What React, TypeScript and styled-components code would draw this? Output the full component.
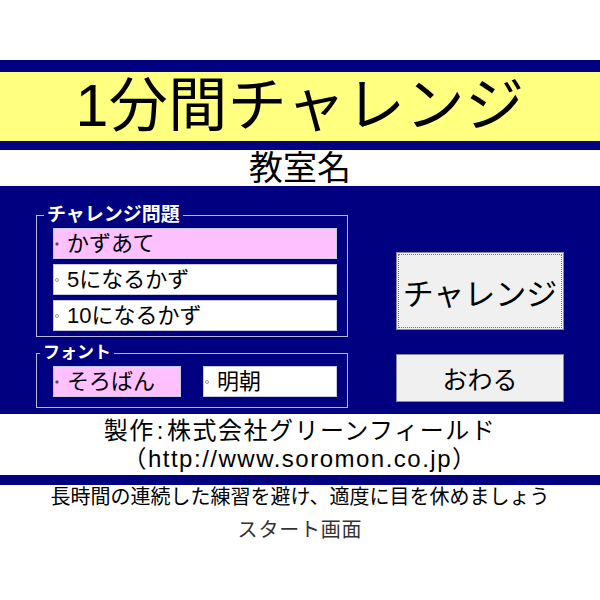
import styled, { createGlobalStyle } from "styled-components";

const GlobalStyle = createGlobalStyle`
  body {
    margin: 0;
    background: #fff;
    font-family: "Liberation Sans", "Noto Sans CJK JP", sans-serif;
    color: #000;
  }
`;

const NAVY = "#000080";

const Page = styled.div`
  width: 600px;
  height: 600px;
  display: flex;
  flex-direction: column;
`;

const Spacer = styled.div<{ $h: number }>`
  height: ${(p) => p.$h}px;
  flex-shrink: 0;
`;

const NavyRule = styled.div<{ $h: number }>`
  height: ${(p) => p.$h}px;
  background: ${NAVY};
  flex-shrink: 0;
`;

const TitleBand = styled.h1`
  margin: 0;
  height: 69px;
  background: #ffff80;
  font-size: 59px;
  font-weight: normal;
  line-height: 69px;
  text-align: center;
  letter-spacing: 0.5px;
`;

const RoomName = styled.div`
  height: 36px;
  font-size: 34px;
  line-height: 36px;
  text-align: center;
`;

const Panel = styled.div`
  height: 228px;
  box-sizing: border-box;
  background: ${NAVY};
  display: grid;
  grid-template-columns: 312px 168px;
  column-gap: 48px;
  padding: 18px 0 5px 36px;
`;

const LeftCol = styled.div`
  display: flex;
  flex-direction: column;
  gap: 5px;
`;

const Group = styled.fieldset`
  margin: 0;
  padding: 0;
  border: 1px solid #b8b8d0;
  min-width: 0;
`;

const Legend = styled.legend<{ $size: number; $offset: number }>`
  margin-left: ${(p) => p.$offset}px;
  padding: 0 3px 0 3px;
  color: #fff;
  font-weight: bold;
  font-size: ${(p) => p.$size}px;
  line-height: 22px;
`;

const OptionList = styled.div<{ $row?: boolean }>`
  display: flex;
  flex-direction: ${(p) => (p.$row ? "row" : "column")};
  gap: ${(p) => (p.$row ? 22 : 5)}px;
  padding: 2px 10px ${(p) => (p.$row ? 10 : 5)}px 16px;
`;

const Option = styled.label<{ $checked: boolean; $w?: number }>`
  width: ${(p) => (p.$w ? `${p.$w}px` : "auto")};
  height: 31px;
  box-sizing: border-box;
  display: flex;
  align-items: center;
  background: ${(p) => (p.$checked ? "#ffc0ff" : "#fff")};
  border: 1px solid #c8c8e0;
  font-size: 22px;
  line-height: 29px;
  white-space: nowrap;
`;

const Dot = styled.span<{ $checked: boolean }>`
  width: 4px;
  height: 4px;
  margin: 0 8px 0 1px;
  border-radius: 50%;
  box-sizing: border-box;
  border: 1px solid #9a9a9a;
  background: ${(p) => (p.$checked ? "#303030" : "#fff")};
  flex-shrink: 0;
`;

const RightCol = styled.div`
  display: flex;
  flex-direction: column;
  gap: 24px;
  padding-top: 48px;
`;

const ActionButton = styled.button<{ $h: number; $size: number; $focused?: boolean }>`
  width: 168px;
  height: ${(p) => p.$h}px;
  padding: 0;
  background: #f0f0f0;
  border: 1px solid #8a8a9a;
  font-family: "Liberation Sans", "Noto Sans CJK JP", sans-serif;
  font-size: ${(p) => p.$size}px;
  color: #000;
  outline: ${(p) => (p.$focused ? "1px dotted #707070" : "none")};
  outline-offset: -3px;
`;

const Credits = styled.div`
  height: 61px;
  display: flex;
  flex-direction: column;
  align-items: center;
  justify-content: center;
`;

const CreditLine = styled.div`
  font-size: 24px;
  line-height: 28px;
  letter-spacing: 1.5px;
  white-space: nowrap;
`;

const Colon = styled.span`
  padding: 0 2px;
`;

const Notice = styled.div`
  font-size: 20px;
  line-height: 24px;
  text-align: center;
`;

const Caption = styled.div`
  margin-top: 9px;
  font-size: 20px;
  line-height: 24px;
  text-align: center;
  color: #333;
  letter-spacing: 0.8px;
`;

const problems = ["かずあて", "5になるかず", "10になるかず"];
const fonts = [
  { name: "そろばん", w: 128 },
  { name: "明朝", w: 134 },
];

export default function App() {
  return (
    <>
      <GlobalStyle />
      <Page>
        <Spacer $h={60} />
        <NavyRule $h={12} />
        <TitleBand>1分間チャレンジ</TitleBand>
        <NavyRule $h={9} />
        <RoomName>教室名</RoomName>
        <Panel>
          <LeftCol>
            <Group>
              <Legend $size={19} $offset={7}>チャレンジ問題</Legend>
              <OptionList>
                {problems.map((p, i) => (
                  <Option key={p} $checked={i === 0}>
                    <Dot $checked={i === 0} />
                    {p}
                  </Option>
                ))}
              </OptionList>
            </Group>
            <Group>
              <Legend $size={17} $offset={3}>フォント</Legend>
              <OptionList $row>
                {fonts.map((f, i) => (
                  <Option key={f.name} $checked={i === 0} $w={f.w}>
                    <Dot $checked={i === 0} />
                    {f.name}
                  </Option>
                ))}
              </OptionList>
            </Group>
          </LeftCol>
          <RightCol>
            <ActionButton $h={78} $size={31} $focused>
              チャレンジ
            </ActionButton>
            <ActionButton $h={48} $size={25}>
              おわる
            </ActionButton>
          </RightCol>
        </Panel>
        <Credits>
          <CreditLine>
            製作<Colon>:</Colon>株式会社グリーンフィールド
          </CreditLine>
          <CreditLine>（http://www.soromon.co.jp）</CreditLine>
        </Credits>
        <NavyRule $h={10} />
        <Notice>長時間の連続した練習を避け、適度に目を休めましょう</Notice>
        <Caption>スタート画面</Caption>
      </Page>
    </>
  );
}
